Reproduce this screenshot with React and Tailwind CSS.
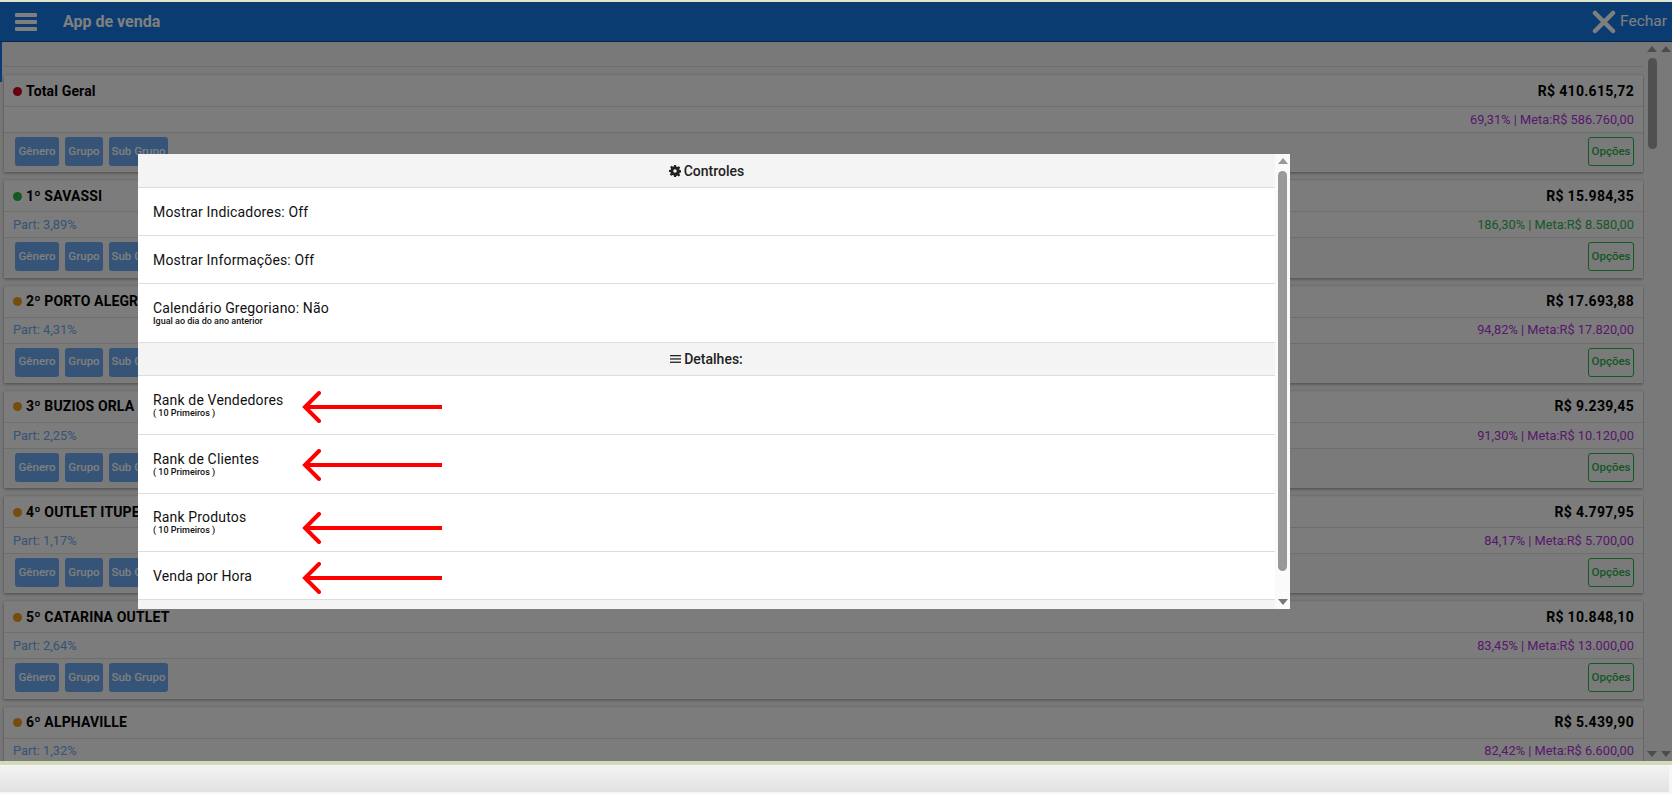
import React from "react";

const roxo = "text-[#b030d8]";
const verde = "text-[#2eb04e]";
const lojas = [
  { nome: "Total Geral", valor: "R$ 410.615,72", part: "", meta: "69,31% | Meta:R$ 586.760,00", dot: "bg-[#d0021b]", metaCor: roxo },
  { nome: "1º SAVASSI", valor: "R$ 15.984,35", part: "Part: 3,89%", meta: "186,30% | Meta:R$ 8.580,00", dot: "bg-[#28b04a]", metaCor: verde },
  { nome: "2º PORTO ALEGRE", valor: "R$ 17.693,88", part: "Part: 4,31%", meta: "94,82% | Meta:R$ 17.820,00", dot: "bg-[#ee9a1c]", metaCor: roxo },
  { nome: "3º BUZIOS ORLA", valor: "R$ 9.239,45", part: "Part: 2,25%", meta: "91,30% | Meta:R$ 10.120,00", dot: "bg-[#ee9a1c]", metaCor: roxo },
  { nome: "4º OUTLET ITUPEVA", valor: "R$ 4.797,95", part: "Part: 1,17%", meta: "84,17% | Meta:R$ 5.700,00", dot: "bg-[#ee9a1c]", metaCor: roxo },
  { nome: "5º CATARINA OUTLET", valor: "R$ 10.848,10", part: "Part: 2,64%", meta: "83,45% | Meta:R$ 13.000,00", dot: "bg-[#ee9a1c]", metaCor: roxo },
  { nome: "6º ALPHAVILLE", valor: "R$ 5.439,90", part: "Part: 1,32%", meta: "82,42% | Meta:R$ 6.600,00", dot: "bg-[#ee9a1c]", metaCor: roxo },
];

function Btn({ children, className }) {
  return (
    <button className={"h-[29px] rounded-[3px] bg-[#6aa8ee] text-white text-[11.5px] font-medium flex items-center justify-center " + className}>
      {children}
    </button>
  );
}

function Card({ l }) {
  return (
    <div className="h-[97.25px] mb-2 mr-px ml-[4px] bg-[#f8f8f8] border-t border-[#f0f0f0] shadow-[0_1px_3px_rgba(0,0,0,0.4)] shrink-0">
      <div className="h-[31px] flex items-center justify-between pl-[9px] pr-[9px] border-b border-[#ddd]">
        <div className="flex items-center gap-[4px] text-[14px] font-bold text-black tracking-[0.15px]">
          <span className={"w-[9px] h-[9px] rounded-full " + l.dot} />
          {l.nome}
        </div>
        <div className="text-[14px] font-bold text-black tracking-[0.3px]">{l.valor}</div>
      </div>
      <div className="h-[26px] flex items-center justify-between pl-[9px] pr-[9px] border-b border-[#ddd] text-[12.8px]">
        <span className="text-[#6aa8ee]">{l.part}</span>
        <span className={l.metaCor}>{l.meta}</span>
      </div>
      <div className="h-[38px] flex items-start justify-between pt-[4px] pl-[11px] pr-[9px] bg-[#f4f4f4]">
        <div className="flex gap-[6px]">
          <Btn className="w-[44px]">Gênero</Btn>
          <Btn className="w-[38px]">Grupo</Btn>
          <Btn className="w-[59px]">Sub Grupo</Btn>
        </div>
        <button className="w-[46px] h-[29px] rounded-[3px] border border-[#28b04a] text-[#28b04a] text-[11.5px] font-medium">Opções</button>
      </div>
    </div>
  );
}

function Up({ className }) {
  return <div className={"w-0 h-0 border-x-[5px] border-x-transparent border-b-[6px] " + className} />;
}
function Down({ className }) {
  return <div className={"w-0 h-0 border-x-[5px] border-x-transparent border-t-[6px] " + className} />;
}

function Linha({ titulo, sub, h }) {
  return (
    <div className={"flex flex-col justify-center pl-[15px] border-b border-[#ddd] text-[#111] " + h}>
      <div className="text-[14px] leading-[16px] tracking-[0.16px]">{titulo}</div>
      {sub && <div className="text-[9px] leading-[11px] font-medium">{sub}</div>}
    </div>
  );
}

function Secao({ children, h }) {
  return (
    <div className={"flex items-center justify-center gap-[3px] bg-[#f4f4f4] border-b border-[#ddd] text-[14px] font-medium text-[#222] " + h}>
      {children}
    </div>
  );
}

function Seta({ top }) {
  return (
    <svg className="absolute left-[302px]" style={{ top }} width="140" height="32" viewBox="0 0 140 32" fill="none" stroke="#ff0000" strokeWidth="4">
      <path d="M3 16H140" />
      <path d="M17 2L3 16L17 30" strokeLinecap="round" strokeLinejoin="miter" />
    </svg>
  );
}

export default function App() {
  return (
    <div className="relative w-[1672px] h-[794px] overflow-hidden flex flex-col bg-[#f2f2f2] font-['Roboto',sans-serif]">
      <div className="h-[2px] bg-[#dfe6cc] shrink-0" />
      <div className="relative flex-1 min-h-0 flex flex-col">
        <header className="h-[40px] shrink-0 flex items-center justify-between bg-[#1479e3] border-b border-[#0a4a94] text-white">
          <div className="flex items-center">
            <div className="ml-[15px] w-[22px] flex flex-col gap-[3px]">
              <span className="h-[4px] rounded-[1px] bg-white" />
              <span className="h-[4px] rounded-[1px] bg-white" />
              <span className="h-[4px] rounded-[1px] bg-white" />
            </div>
            <div className="ml-[26px] text-[16px] font-bold">App de venda</div>
          </div>
          <div className="flex items-center gap-[4px] mr-[5px]">
            <svg width="24" height="24" viewBox="0 0 24 24" fill="none" stroke="#fff" strokeWidth="4.5" strokeLinecap="round">
              <path d="M3 3L21 21M21 3L3 21" />
            </svg>
            <span className="text-[15.5px] pt-px">Fechar</span>
          </div>
        </header>
        <div className="relative flex-1 min-h-0 flex">
          <div className="absolute left-0 top-0 w-[2px] h-[40px] bg-[#1479e3]" />
          <div className="flex-1 min-w-0 overflow-hidden flex flex-col">
            <div className="h-[25px] ml-[3px] mr-px bg-[#f2f2f2] border-b border-[#ddd] shrink-0 mb-2" />
            {lojas.map((l) => <Card key={l.nome} l={l} />)}
          </div>
          <div className="w-[16px] flex flex-col items-center justify-between pt-[4px] pb-[4px]">
            <div className="flex flex-col items-center gap-[6px] w-full">
              <Up className="border-b-[#999]" />
              <div className="w-[9px] h-[91px] rounded-[5px] bg-[#a0a0a0]" />
            </div>
            <Down className="border-t-[#999]" />
          </div>
          <div className="w-[12px] flex flex-col items-center justify-between pt-[4px] pb-[4px]">
            <Up className="border-b-[#999]" />
            <Down className="border-t-[#999]" />
          </div>
        </div>
        <div className="absolute inset-0 bg-black/50" />
      </div>
      <footer className="h-[33px] shrink-0 bg-[#f6f6f6] border-t-[4px] border-[#d0dcb8] pt-px pr-[3px] pb-[2px]">
        <div className="h-full bg-gradient-to-b from-[#f3f3f3] to-[#e1e1e1]" />
      </footer>

      <div className="absolute left-[138px] top-[154px] w-[1152px] h-[455px] bg-white flex overflow-hidden">
        <div className="flex-1 min-w-0 flex flex-col overflow-hidden">
          <Secao h="h-[34px] shrink-0 pt-px">
            <svg width="12" height="12" viewBox="0 0 24 24" fill="#222"><path fillRule="evenodd" d="M10 0h4l.7 3.4 2 .8 2.9-1.9 2.8 2.8-1.9 2.9.8 2 3.4.7v4l-3.4.7-.8 2 1.9 2.9-2.8 2.8-2.9-1.9-2 .8L14 24h-4l-.7-3.4-2-.8-2.9 1.9-2.8-2.8 1.9-2.9-.8-2L0 14v-4l3.4-.7.8-2-1.9-2.9 2.8-2.8 2.9 1.9 2-.8zM12 8.5a3.5 3.5 0 100 7 3.5 3.5 0 000-7z" /></svg>
            Controles
          </Secao>
          <Linha titulo="Mostrar Indicadores: Off" h="h-[48px] shrink-0" />
          <Linha titulo="Mostrar Informações: Off" h="h-[48px] shrink-0" />
          <Linha titulo="Calendário Gregoriano: Não" sub="Igual ao dia do ano anterior" h="h-[59px] shrink-0" />
          <Secao h="h-[33px] shrink-0">
            <svg width="11" height="10" viewBox="0 0 11 10" fill="#222"><rect y="1" width="11" height="1.3" /><rect y="4.3" width="11" height="1.3" /><rect y="7.6" width="11" height="1.3" /></svg>
            Detalhes:
          </Secao>
          <Linha titulo="Rank de Vendedores" sub="( 10 Primeiros )" h="h-[59px] shrink-0" />
          <Linha titulo="Rank de Clientes" sub="( 10 Primeiros )" h="h-[59px] shrink-0" />
          <Linha titulo="Rank Produtos" sub="( 10 Primeiros )" h="h-[58px] shrink-0" />
          <Linha titulo="Venda por Hora" h="h-[48px] shrink-0" />
          <div className="flex-1 bg-[#f4f4f4]" />
        </div>
        <div className="w-[15px] shrink-0 flex flex-col items-center justify-between pt-[4px] pb-[4px] bg-[#fafafa]">
          <div className="flex flex-col items-center gap-[7px] w-full">
            <Up className="border-b-[#999]" />
            <div className="w-[9px] h-[400px] rounded-[5px] bg-[#999]" />
          </div>
          <Down className="border-t-[#777]" />
        </div>
      </div>

      <Seta top={391} />
      <Seta top={449} />
      <Seta top={512} />
      <Seta top={562} />
    </div>
  );
}
